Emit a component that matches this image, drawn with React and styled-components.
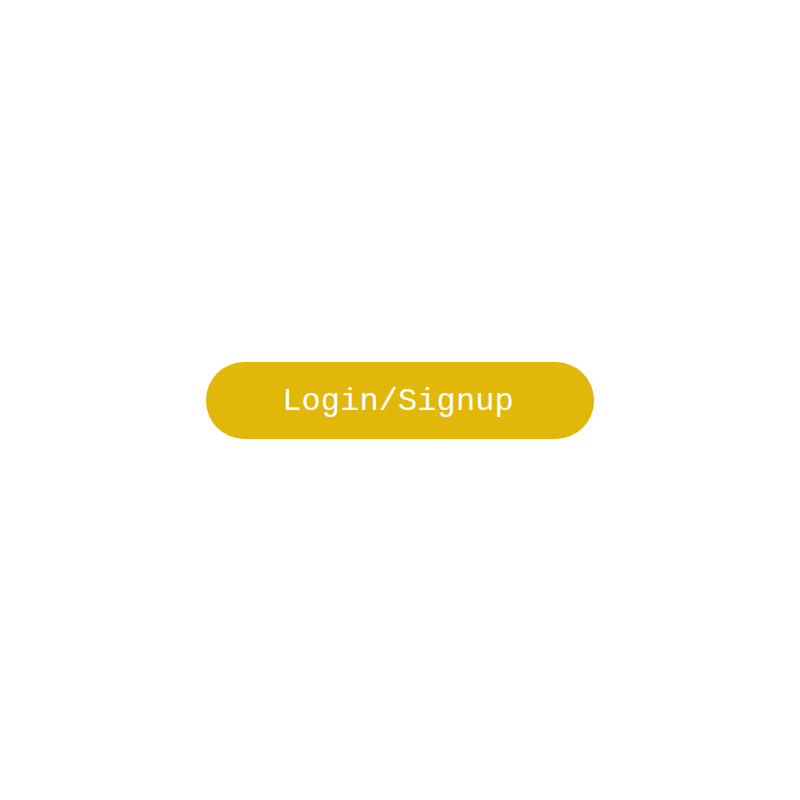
import React from "react";
import styled, { createGlobalStyle } from "styled-components";

const Global = createGlobalStyle`
  html, body { margin: 0; padding: 0; background: #ffffff; }
  #root { min-height: 100vh; }
`;

const Page = styled.main`
  min-height: 100vh;
  display: flex;
  align-items: center;
  justify-content: center;
`;

const Button = styled.button`
  width: 388px;
  height: 77px;
  border: none;
  border-radius: 38px;
  background: #e1b80a;
  color: #ffffff;
  font-family: "Liberation Mono", "DejaVu Sans Mono", monospace;
  font-size: 32px;
  letter-spacing: 0.1px;
  cursor: pointer;
  display: flex;
  align-items: center;
  justify-content: center;
  padding: 2px 4px 0 0;
`;

export default function App() {
  return (
    <>
      <Global />
      <Page>
        <Button>Login/Signup</Button>
      </Page>
    </>
  );
}
